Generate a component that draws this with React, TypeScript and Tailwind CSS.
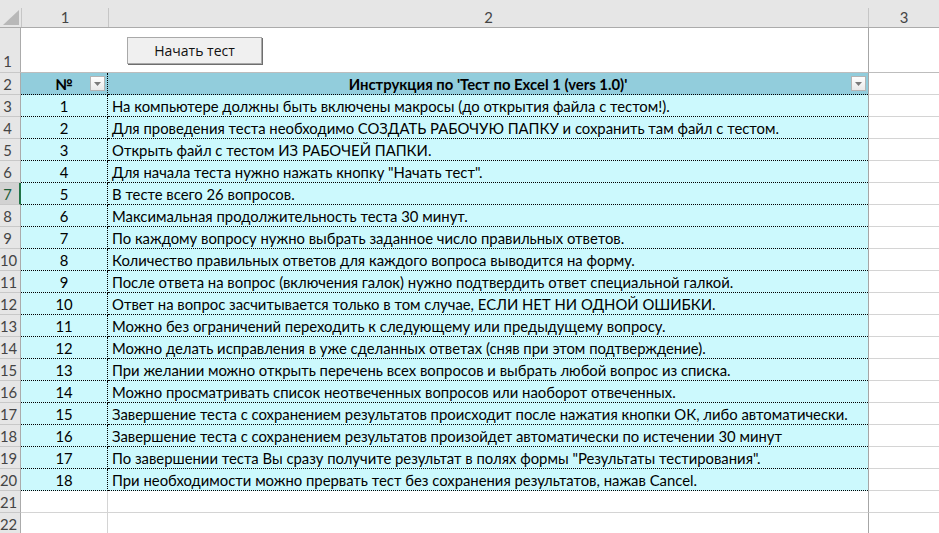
import React from "react";

const items = [
  "На компьютере должны быть включены макросы (до открытия файла с тестом!).",
  "Для проведения теста необходимо СОЗДАТЬ РАБОЧУЮ ПАПКУ и сохранить там файл с тестом.",
  "Открыть файл с тестом ИЗ РАБОЧЕЙ ПАПКИ.",
  "Для начала теста нужно нажать кнопку \"Начать тест\".",
  "В тесте всего 26 вопросов.",
  "Максимальная продолжительность теста 30 минут.",
  "По каждому вопросу нужно выбрать заданное число правильных ответов.",
  "Количество правильных ответов для каждого вопроса выводится на форму.",
  "После ответа на вопрос (включения галок) нужно подтвердить ответ специальной галкой.",
  "Ответ на вопрос засчитывается только в том случае, ЕСЛИ НЕТ НИ ОДНОЙ ОШИБКИ.",
  "Можно без ограничений переходить к следующему или предыдущему вопросу.",
  "Можно делать исправления в уже сделанных ответах (сняв при этом подтверждение).",
  "При желании можно открыть перечень всех вопросов и выбрать любой вопрос из списка.",
  "Можно просматривать список неотвеченных вопросов или наоборот отвеченных.",
  "Завершение теста с сохранением результатов происходит после нажатия кнопки ОК, либо автоматически.",
  "Завершение теста с сохранением результатов произойдет автоматически по истечении 30 минут",
  "По завершении теста Вы сразу получите результат в полях формы \"Результаты тестирования\".",
  "При необходимости можно прервать тест без сохранения результатов, нажав Cancel.",
];

function FilterButton() {
  return (
    <div className="absolute right-[2px] top-[3px] w-[15px] h-[15px] border border-[#b4b4b4] bg-gradient-to-b from-white to-[#e9e9e9] flex items-center justify-center">
      <svg width="7" height="4" viewBox="0 0 7 4">
        <path d="M0 0 L7 0 L3.5 4 Z" fill="#7a7a7a" />
      </svg>
    </div>
  );
}

function RowHeader({ n, selected, tall }: { n: number; selected?: boolean; tall?: boolean }) {
  return (
    <div
      className={`w-[21px] shrink-0 flex ${tall ? "items-end pb-[3px]" : "items-center pt-[1px]"} border-b border-[#c8c8c8] ${
        selected ? "bg-[#d2d2d2] border-r-2 border-r-[#217346] text-[#1d5e3a]" : "bg-[#e6e6e6] border-r border-r-[#ababab] text-[#444]"
      }`}
    >
      <span className="w-[15px] text-center leading-none whitespace-nowrap">{n}</span>
    </div>
  );
}

export default function App() {
  return (
    <div className="w-[939px] h-[533px] overflow-hidden bg-white text-[14.85px] text-black font-['Lato',sans-serif]">
      {/* column headers */}
      <div className="flex h-[28px] bg-[#e6e6e6] border-b border-[#ababab]">
        <div className="w-[21px] shrink-0 mt-[8px] flex items-end justify-center pb-[2px]">
          <svg width="16" height="15" viewBox="0 0 16 15">
            <path d="M16 0 L16 15 L0 15 Z" fill="#b8b8b8" />
          </svg>
        </div>
        <div className="w-[87px] shrink-0 mt-[8px] border-l border-[#c6c6c6] flex items-center justify-center text-[#444]">1</div>
        <div className="w-[760px] shrink-0 mt-[8px] border-l border-[#c6c6c6] flex items-center justify-center text-[#444]">2</div>
        <div className="flex-1 mt-[8px] border-l border-[#c6c6c6] flex items-center justify-center text-[#444]">3</div>
      </div>

      {/* row 1 */}
      <div className="flex h-[45px]">
        <RowHeader n={1} tall />
        <div className="w-[847px] shrink-0 border-b border-[#bdbdbd] pt-[9px] pl-[106px]">
          <button className="w-[135px] h-[27px] bg-[#f0f0f0] border border-[#a9a9a9] shadow-[1px_1px_0_#6e6e6e] text-[14px] text-[#111] font-['Open_Sans',sans-serif] flex items-center justify-center">
            Начать тест
          </button>
        </div>
        <div className="flex-1 border-l border-[#a6a6a6] border-b border-b-[#bdbdbd]" />
      </div>

      {/* row 2: table header */}
      <div className="flex h-[22px]">
        <RowHeader n={2} />
        <div className="relative w-[87px] shrink-0 bg-[#92cddc] border-r border-dotted border-black border-b flex items-center justify-center pt-[1px] font-bold">
          №
          <FilterButton />
        </div>
        <div className="relative w-[760px] shrink-0 bg-[#92cddc] border-b border-dotted border-black flex items-center justify-center pt-[1px] font-bold">
          Инструкция по 'Тест по Excel 1 (vers 1.0)'
          <FilterButton />
        </div>
        <div className="flex-1 border-l border-[#a6a6a6] border-b border-b-[#d4d4d4]" />
      </div>

      {/* data rows */}
      {items.map((text, i) => (
        <div key={i} className="flex h-[22px]">
          <RowHeader n={i + 3} selected={i + 3 === 7} />
          <div className="w-[87px] shrink-0 bg-[#ccf9fd] border-r border-b border-dotted border-black flex items-center justify-center pt-[1px]">
            {i + 1}
          </div>
          <div className="w-[760px] shrink-0 bg-[#ccf9fd] border-b border-dotted border-black flex items-center pl-[4px] pt-[1px] whitespace-nowrap">
            {text}
          </div>
          <div className="flex-1 border-l border-[#a6a6a6] border-b border-b-[#d4d4d4]" />
        </div>
      ))}

      {/* empty rows */}
      {[21, 22].map((n) => (
        <div key={n} className="flex h-[22px]">
          <RowHeader n={n} />
          <div className="w-[87px] shrink-0 border-r border-b border-[#d4d4d4]" />
          <div className="w-[760px] shrink-0 border-b border-[#d4d4d4]" />
          <div className="flex-1 border-l border-[#a6a6a6] border-b border-b-[#d4d4d4]" />
        </div>
      ))}
    </div>
  );
}
